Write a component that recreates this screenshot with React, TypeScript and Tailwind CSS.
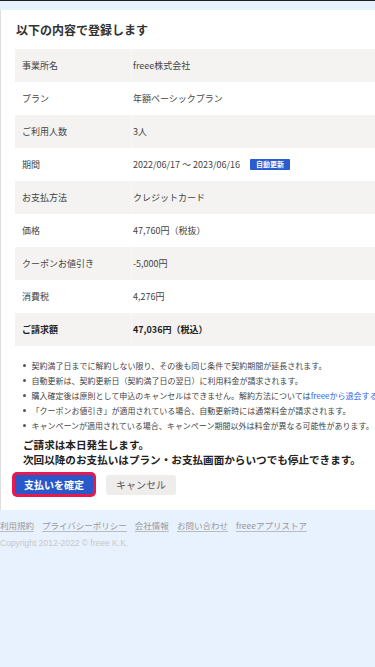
import React from 'react';

const rows = [
  { label: '事業所名', value: 'freee株式会社' },
  { label: 'プラン', value: '年額ベーシックプラン' },
  { label: 'ご利用人数', value: '3人' },
  { label: '期間', value: '2022/06/17 〜 2023/06/16', badge: '自動更新' },
  { label: 'お支払方法', value: 'クレジットカード' },
  { label: '価格', value: '47,760円（税抜）' },
  { label: 'クーポンお値引き', value: '-5,000円' },
  { label: '消費税', value: '4,276円' },
  { label: 'ご請求額', value: '47,036円（税込）', bold: true },
];

const notes = [
  '契約満了日までに解約しない限り、その後も同じ条件で契約期間が延長されます。',
  '自動更新は、契約更新日（契約満了日の翌日）に利用料金が請求されます。',
  null,
  '「クーポンお値引き」が適用されている場合、自動更新時には通常料金が請求されます。',
  'キャンペーンが適用されている場合、キャンペーン期間以外は料金が異なる可能性があります。',
];

const footerLinks = ['利用規約', 'プライバシーポリシー', '会社情報', 'お問い合わせ', 'freeeアプリストア'];

export default function App() {
  return (
    <div
      className="min-h-screen w-full overflow-hidden bg-[#e8f1fe] border-t border-[#1f1f1f]"
      style={{ fontFamily: '"Noto Sans CJK JP", "Noto Sans", sans-serif' }}
    >
      <div className="pt-[9px]">
        <div className="w-[640px] bg-white border-l border-[#dedede] pt-[11px] pb-[13px]">
          <h1 className="pl-[15px] text-[12px] leading-[18px] font-bold text-[#333]">以下の内容で登録します</h1>

          <div className="ml-[14px] mt-[10px]">
            {rows.map((row, i) => (
              <div
                key={row.label}
                className={`flex h-[33px] items-center text-[9px] ${i % 2 === 0 ? 'bg-[#f4f3f2]' : 'bg-white'} ${row.bold ? 'font-bold text-[#222]' : 'text-[#444]'}`}
              >
                <div className={`w-[117px] h-full flex items-center pl-[7px] border-r ${i % 2 === 0 ? 'border-[#f8f8f7]' : 'border-white'}`}>
                  {row.label}
                </div>
                <div className="flex items-center pl-[1px] whitespace-nowrap">
                  <span>{row.value}</span>
                  {row.badge && (
                    <span className="ml-[10px] inline-flex h-[11px] items-center rounded-[1px] bg-[#2a5bd0] px-[6px] text-[7px] font-bold text-white">
                      {row.badge}
                    </span>
                  )}
                </div>
              </div>
            ))}
          </div>

          <ul className="mt-[12px] pl-[22px] text-[8px] leading-[15px] text-[#444] whitespace-nowrap">
            {notes.map((note, i) => (
              <li key={i} className="flex items-center">
                <span className="mr-[6px] inline-block h-[2.5px] w-[2.5px] rounded-full bg-[#555]" />
                {note ?? (
                  <span>
                    購入確定後は原則として申込のキャンセルはできません。解約方法については
                    <span className="text-[#2864f0]">freeeから退会する方法</span>
                    をご確認ください。
                  </span>
                )}
              </li>
            ))}
          </ul>

          <div className="mt-[4px] pl-[22px] text-[10.6px] leading-[15px] font-bold text-[#222] whitespace-nowrap">
            <p>ご請求は本日発生します。</p>
            <p>次回以降のお支払いはプラン・お支払画面からいつでも停止できます。</p>
          </div>

          <div className="mt-[5px] flex items-center pl-[11px]">
            <button className="h-[25px] rounded-[5px] bg-[#e8194f] p-[3px]">
              <span className="flex h-full items-center rounded-[2px] bg-[#2a57c9] px-[9px] text-[10px] font-bold text-white">
                支払いを確定
              </span>
            </button>
            <button className="ml-[10px] h-[20px] rounded-[3px] bg-[#efedeb] px-[10px] text-[10px] text-[#555]">
              キャンセル
            </button>
          </div>
        </div>
      </div>

      <div className="mt-[9px] flex gap-[8px] text-[8.5px] leading-[12px] text-[#999] whitespace-nowrap">
        {footerLinks.map((l) => (
          <span key={l} className="underline underline-offset-2 decoration-[#bbb]">{l}</span>
        ))}
      </div>
      <p className="mt-[6px] text-[8.5px] leading-[12px] text-[#c8c8c8]" style={{ fontFamily: '"Liberation Sans", sans-serif' }}>
        Copyright 2012-2022 © freee K.K.
      </p>
    </div>
  );
}
